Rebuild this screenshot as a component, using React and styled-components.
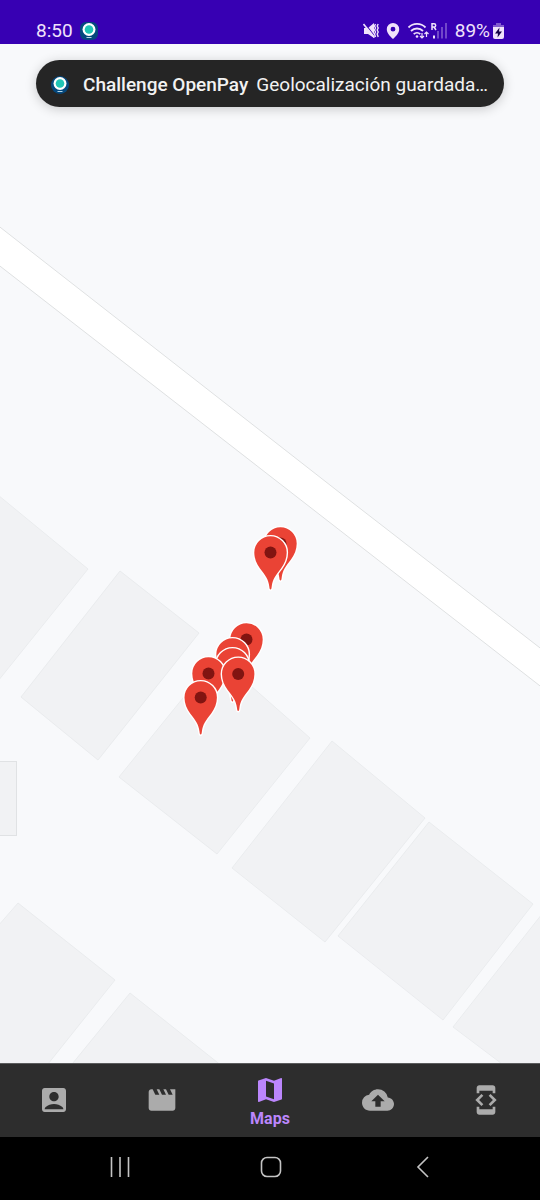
import React from "react";
import styled, { createGlobalStyle } from "styled-components";
import { MdAccountBox, MdMovie, MdMap, MdBackup, MdDeveloperMode } from "react-icons/md";

const GlobalStyle = createGlobalStyle`
  * { box-sizing: border-box; }
  body { margin: 0; background: #000; font-family: Roboto, "Liberation Sans", sans-serif; }
  button { border: 0; padding: 0; background: none; font: inherit; cursor: pointer; }
`;

const Screen = styled.div`
  display: flex;
  flex-direction: column;
  min-height: 100vh;
`;

const StatusBar = styled.header`
  display: flex;
  justify-content: space-between;
  align-items: flex-end;
  height: 44px;
  padding: 0 36px 1px;
  background: #3700b3;
  color: #f0e2fb;
  font-size: 19px;
  line-height: 24px;
`;

const StatusGroup = styled.div`
  display: flex;
  align-items: center;
  gap: ${({ $gap }) => $gap}px;
`;

const StatusIcon = styled.svg`
  display: block;
  flex: none;
`;

const MapArea = styled.main`
  position: relative;
  display: grid;
  flex: 1 1 0;
  min-height: 0;
  background: #f8f9fb;
`;

const MapDrawing = styled.svg`
  display: block;
  width: 100%;
  height: 100%;
`;

const Toast = styled.div`
  position: absolute;
  top: 16px;
  left: 36px;
  right: 36px;
  display: flex;
  align-items: center;
  height: 47px;
  padding: 2px 15px 0 14px;
  border-radius: 24px;
  background: #252525;
  color: #f2f2f2;
  font-size: 19px;
  line-height: 24px;
  white-space: nowrap;
  box-shadow: 0 2px 12px rgba(0, 0, 0, 0.2);
`;

const ToastTitle = styled.strong`
  margin: 0 8px 0 13px;
  font-weight: 500;
`;

const ToastText = styled.span`
  min-width: 0;
  overflow: hidden;
`;

const TabBar = styled.nav`
  display: flex;
  flex: none;
  height: 74px;
  background: #2d2d2d;
  box-shadow: inset 0 1px 0 #5b5c5d;
`;

const Tab = styled.button`
  display: flex;
  flex: 1;
  flex-direction: column;
  align-items: center;
  justify-content: center;
  padding-top: ${({ $active }) => ($active ? 2 : 0)}px;
  color: ${({ $active }) => ($active ? "#bb86fc" : "#ababab")};
  font-size: 16px;
  font-weight: 700;
  line-height: 20px;

  svg { display: block; }
`;

const TabLabel = styled.span`
  margin-top: 3px;
`;

const SystemBar = styled.footer`
  display: flex;
  flex: none;
  height: 63px;
  padding: 0 42px 4px 44px;
  background: #000;
`;

const SystemButton = styled.button`
  display: flex;
  flex: 1;
  align-items: center;
  justify-content: center;
`;

const buildings = [
  "-2,451 88,525 -2,637",
  "120,527 199,589 98,716 21,653",
  "217,612 310,694 217,810 119,733",
  "332,697 425,774 325,898 232,824",
  "429,778 533,860 443,976 338,892",
  "542,870 542,1050 453,983",
  "-2,882 18,859 115,936 40,1030 -2,1030",
  "130,949 232,1030 64,1030",
];

const pins = [
  [280.5, 499.5], [270.5, 508.5],
  [246.5, 595.5], [232.5, 610.5], [232.5, 620.5],
  [208.5, 629.5], [238.2, 630], [200.7, 653.5],
];

function Pin({ x, y }) {
  return (
    <g transform={`translate(${x} ${y})`}>
      <path
        d="M0 37C-.8 37-1 36-1.200 34C-2 27-5 23-10.500 16C-14 11-16.200 6-16.200 0A16.200 16.200 0 0 1 16.200 0C16.200 6 14 11 10.500 16C5 23 2 27 1.200 34C1 36 .8 37 0 37Z"
        fill="#ea4335"
        stroke="#fff"
        strokeWidth="2.8"
        paintOrder="stroke"
      />
      <circle r="6" fill="#811411" />
    </g>
  );
}

function AppLogo({ size, round }) {
  return (
    <StatusIcon width={size} height={size} viewBox="0 0 20 20" aria-hidden="true">
      <rect x="1" y="1" width="18" height="18" rx={round ? 9 : 6} fill="#05487d" />
      <circle cx="10" cy="8.500" r="6.500" fill="#fff" />
      <circle cx="10" cy="8.500" r="4.300" fill="#20c5b5" />
      <path d="M7.500 16.500h5" stroke="#b8d8e6" strokeWidth="1" />
    </StatusIcon>
  );
}

const tabs = [
  ["Perfil", MdAccountBox],
  ["Películas", MdMovie],
  ["Maps", MdMap],
  ["Subir", MdBackup],
  ["Desarrollador", MdDeveloperMode],
];

export default function App() {
  return (
    <Screen>
      <GlobalStyle />
      <StatusBar>
        <StatusGroup $gap={6}>
          <span>8:50</span>
          <AppLogo size={20} />
        </StatusGroup>
        <StatusGroup $gap={6}>
          <StatusIcon width="16" height="18" viewBox="0 0 16 18" fill="none" stroke="currentColor" aria-hidden="true">
            <path d="M1 6h4l6-5v15l-6-4H1Z" fill="currentColor" stroke="none" />
            <path d="M1.500 1l10 13" stroke="#3700b3" strokeWidth="1.200" />
            <path d="M.5 2l11 13.500" strokeWidth="1.600" />
            <path d="M12.500 2l-1 2 1 2-1 2 1 2-1 2 1 3M15.200 2l-1 2 1 2-1 2 1 2-1 2 1 3" strokeWidth="1.400" />
          </StatusIcon>
          <StatusIcon width="16" height="18" viewBox="0 0 16 18" aria-hidden="true">
            <path fillRule="evenodd" d="M8 1a6.200 6.200 0 0 0-6.200 6.200C1.800 11 5 14 8 17c3-3 6.200-6 6.200-9.800A6.200 6.200 0 0 0 8 1Zm0 3.800a2.400 2.400 0 1 1 0 4.800a2.400 2.400 0 0 1 0-4.800Z" fill="currentColor" />
          </StatusIcon>
          <StatusIcon width="42" height="18" viewBox="0 0 42 18" fill="none" stroke="currentColor" aria-hidden="true">
            <path d="M1.500 5.500a12 12 0 0 1 17 0M4 9a8.500 8.500 0 0 1 12 0M6.700 12.200a4.800 4.800 0 0 1 6.600 0" strokeWidth="1.800" />
            <circle cx="10" cy="14.500" r="1.300" fill="currentColor" stroke="none" />
            <path d="M15 11v5m-2-2l2 2 2-2M19.500 15v-5m-2 2l2-2 2 2" strokeWidth="1.200" />
            <path d="M25 8V1.700h2a1.600 1.600 0 0 1 0 3.400h-2M27 5l2 3" strokeWidth="1.500" />
            <path d="M27 13.500v3" strokeWidth="2" />
            <path d="M31 9v7.500M35 5v11.500M39 1v15.500" strokeWidth="1.600" opacity=".4" />
          </StatusIcon>
          <StatusGroup $gap={3}>
            <span>89%</span>
            <StatusIcon width="11" height="18" viewBox="0 0 11 18" aria-hidden="true">
              <path d="M3 1h5v2h3v3H0V3h3Z" fill="currentColor" opacity=".4" />
              <path d="M0 5h11v10a2 2 0 0 1-2 2H2a2 2 0 0 1-2-2Z" fill="currentColor" />
              <path d="M6.500 5.500L2 11.500h3L4.500 15.500 9 9.500H6Z" fill="#160447" />
            </StatusIcon>
          </StatusGroup>
        </StatusGroup>
      </StatusBar>

      <MapArea>
        <MapDrawing viewBox="0 0 540 1019" preserveAspectRatio="xMidYMid slice" role="img" aria-label="Mapa">
          <path d="M-4 180L344 452L544 607V645L-4 219Z" fill="#fff" stroke="#dfe1e2" strokeWidth="1" />
          <g fill="#f1f2f4" stroke="#eaecee" strokeWidth="1">
            {buildings.map((points) => <polygon key={points} points={points} />)}
            <rect x="-2" y="717.5" width="18.5" height="74" stroke="#e0e2e4" />
          </g>
          {pins.map(([x, y]) => <Pin key={`${x}-${y}`} x={x} y={y} />)}
        </MapDrawing>
        <Toast role="status">
          <AppLogo size={20} round />
          <ToastTitle>Challenge OpenPay</ToastTitle>
          <ToastText>Geolocalización guardada…</ToastText>
        </Toast>
      </MapArea>

      <TabBar>
        {tabs.map(([name, Icon]) => {
          const active = name === "Maps";
          return (
            <Tab key={name} type="button" $active={active} aria-label={name} aria-current={active ? "page" : undefined}>
              <Icon size={32} />
              {active && <TabLabel>{name}</TabLabel>}
            </Tab>
          );
        })}
      </TabBar>

      <SystemBar>
        <SystemButton type="button" aria-label="Recientes">
          <svg width="22" height="22" viewBox="0 0 22 22" fill="none" stroke="#c4c4c4" strokeWidth="1.600">
            <path d="M2.500 1v20M11 1v20M19.500 1v20" />
          </svg>
        </SystemButton>
        <SystemButton type="button" aria-label="Inicio">
          <svg width="22" height="22" viewBox="0 0 22 22" fill="none" stroke="#c4c4c4" strokeWidth="1.600">
            <rect x="1.500" y="1.500" width="19" height="19" rx="5.500" />
          </svg>
        </SystemButton>
        <SystemButton type="button" aria-label="Atrás">
          <svg width="22" height="22" viewBox="0 0 22 22" fill="none" stroke="#c4c4c4" strokeWidth="1.600">
            <path d="M17 1L7 11l10 10" />
          </svg>
        </SystemButton>
      </SystemBar>
    </Screen>
  );
}
